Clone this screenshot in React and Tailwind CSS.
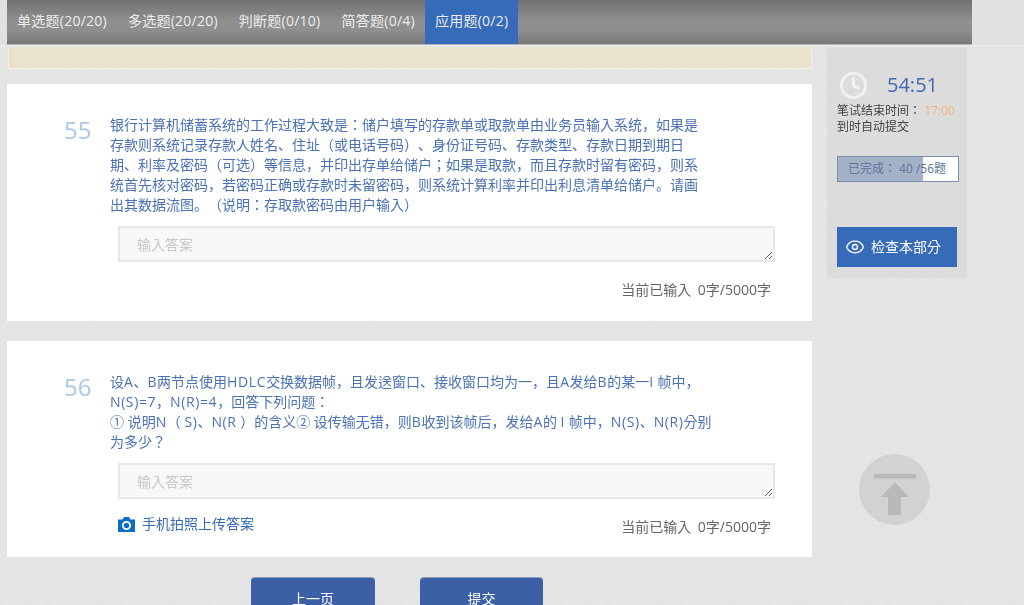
import React from "react";
import { Clock, Eye } from "lucide-react";

const font = "font-['Open_Sans','Noto_Sans_CJK_KR',sans-serif]";
const tabs = ["单选题(20/20)", "多选题(20/20)", "判断题(0/10)", "简答题(0/4)", "应用题(0/2)"];

function Answer() {
  return (
    <textarea
      placeholder="输入答案"
      className="block ml-[111px] w-[657px] h-[36px] bg-[#f8f8f8] border-2 border-[#e8e8e8] px-[17px] py-[7px] text-sm leading-[20px] placeholder:text-[#c8c8c8]"
    />
  );
}

function L({ children }) {
  return <span className="tracking-[0.6px]">{children}</span>;
}

export default function App() {
  return (
    <div className={`w-[1024px] h-[605px] overflow-hidden relative ${font} [text-spacing-trim:space-all] bg-[#e5e5e5] bg-[repeating-linear-gradient(135deg,#e7e7e7_0px,#e7e7e7_1px,#e3e3e3_1px,#e3e3e3_3px)]`}>
      <header className="h-[47px] bg-[#e1e1e1] pl-[7px] border-b-2 border-[#e9e9e9]">
        <nav className="w-[965px] h-[45px] flex border-b border-[#b5b5b5] bg-[linear-gradient(to_bottom,#727272_0%,#8f908f_50%,#8d8e8d_70%,#777777_100%)]">
          {tabs.map((t, i) => (
            <a key={t} className={`h-full px-[10px] text-sm leading-[42px] tracking-[0.25px] text-[#ececec] ${i === 4 ? "bg-[#356bb8]" : i === 3 ? "" : "mr-[1px]"}`}>{t}</a>
          ))}
        </nav>
      </header>

      <div className="flex pl-[7px]">
        <main className="w-[805px] shrink-0">
          <div className="ml-[1px] w-[804px] h-[22px] bg-[#e9e3cb] border border-t-0 border-[#f3f0e2]" />

          <section className="bg-white mt-[15px] h-[237px] pt-[28px]">
            <div className="flex">
              <div className="w-[103px] pl-[57px] shrink-0 text-[24px] leading-[36px] text-[#a9c8e8]">55</div>
              <p className="w-[592px] text-sm leading-[20px] text-[#4a72b4] pt-[3px]">
                银行计算机储蓄系统的工作过程大致是：储户填写的存款单或取款单由业务员输入系统，如果是存款则系统记录存款人姓名、住址（或电话号码）、身份证号码、存款类型、存款日期到期日期、利率及密码（可选）等信息，并印出存单给储户；如果是取款，而且存款时留有密码，则系统首先核对密码，若密码正确或存款时未留密码，则系统计算利率并印出利息清单给储户。请画出其数据流图。（说明：存取款密码由用户输入）
              </p>
            </div>
            <div className="mt-[11px]"><Answer /></div>
            <div className="mt-[18px] pr-[41px] text-right text-sm leading-[20px] text-[#666666] [word-spacing:3px]">当前已输入 0字/5000字</div>
          </section>

          <section className="bg-white mt-[20px] h-[216px] pt-[28px]">
            <div className="flex">
              <div className="w-[103px] pl-[57px] shrink-0 text-[24px] leading-[36px] text-[#a9c8e8]">56</div>
              <p className="w-[620px] text-sm leading-[20px] text-[#4a72b4] pt-[3px]">
                设<L>A</L>、<L>B</L>两节点使用<L>HDLC</L>交换数据帧，且发送窗口、接收窗口均为一，且<L>A</L>发给<L>B</L>的某一<L>I</L> 帧中，<br />
                <L>N(S)=7</L>，<L>N(R)=4</L>，回答下列问题：<br />
                ① 说明<L>N</L>（ <L>S)</L>、<L>N(R</L> ）的含义② 设传输无错，则<L>B</L>收到该帧后，发给<L>A</L>的 <L>I</L> 帧中，<L>N(S)</L>、<L>N(R)</L>分别<br />
                为多少？
              </p>
            </div>
            <div className="mt-[11px]"><Answer /></div>
            <div className="mt-[15px] flex items-center justify-between pl-[111px] pr-[41px]">
              <div className="flex items-center gap-[7px] text-sm leading-[20px] text-[#356bb8] -mt-[4px]">
                <svg width="17" height="15" viewBox="0 0 17 15" className="mt-[2px]">
                  <path d="M0 2.5h4.5L6 0h5l1.5 2.5H17V15H0z" fill="#0f6cc4" />
                  <circle cx="8.5" cy="8.5" r="3.6" fill="none" stroke="#fff" strokeWidth="1.8" />
                </svg>
                手机拍照上传答案
              </div>
              <div className="text-sm leading-[20px] text-[#666666] pt-[3px] [word-spacing:3px]">当前已输入 0字/5000字</div>
            </div>
          </section>

          <div className="flex mt-[20px] pl-[244px] gap-[45px]">
            <button className="w-[124px] h-[42px] rounded-[4px] bg-[#3b60a6] border-t border-[#8d9db5] text-sm leading-[20px] text-white">上一页</button>
            <button className="w-[123px] h-[42px] rounded-[4px] bg-[#3b60a6] border-t border-[#8d9db5] text-sm leading-[20px] text-white">提交</button>
          </div>
        </main>

        <aside className="ml-[15px] w-[140px] h-[231px] bg-[#dcdcdc] pl-[10px] pt-[23px]">
          <div className="flex items-center h-[30px]">
            <Clock size={29} strokeWidth={2.4} className="ml-[2px] text-[#f1f1f1]" />
            <span className="ml-[19px] text-[20px] leading-[30px] text-[#3f69b5]">54:51</span>
          </div>
          <div className="mt-[3px] text-xs leading-[16px] text-[#444444]">
            笔试结束时间： <span className="text-[#f2b27a]">17:00</span>
            <br />到时自动提交
          </div>
          <div className="relative mt-[21px] w-[122px] h-[26px] border border-[#7d8fae] bg-white">
            <div className="h-full w-[85px] bg-[#a4b2c8]" />
            <div className="absolute inset-0 pl-[10px] text-xs leading-[24px] text-[#5a7399] whitespace-nowrap">已完成： 40 /56题</div>
          </div>
          <button className="mt-[45px] w-[120px] h-[40px] bg-[#356bb8] text-white text-sm flex items-center pl-[8px] gap-[6px]">
            <Eye size={20} strokeWidth={1.6} />
            检查本部分
          </button>
        </aside>
      </div>

      <div className="absolute left-[859px] top-[454px] w-[71px] h-[71px] rounded-full bg-[#d2d2d2]">
        <svg width="71" height="71" viewBox="0 0 71 71">
          <path d="M15 20h42v4.5H15z M36 28 50 43H42V61H29V43H22z" fill="#b9b9b9" />
        </svg>
      </div>
    </div>
  );
}
